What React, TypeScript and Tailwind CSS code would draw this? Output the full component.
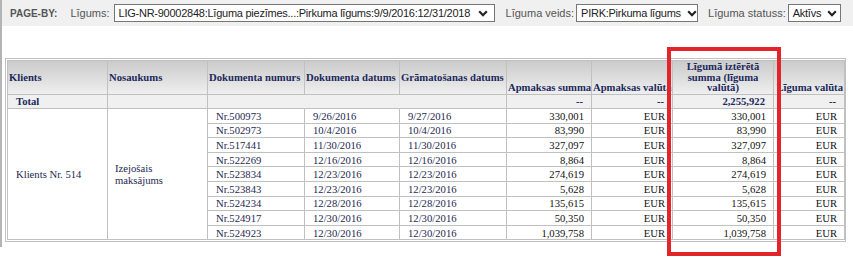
import React from 'react';

const rows = [
  { nr: 'Nr.500973', doc: '9/26/2016', book: '9/27/2016', sum: '330,001', cur: 'EUR', spent: '330,001', cur2: 'EUR' },
  { nr: 'Nr.502973', doc: '10/4/2016', book: '10/4/2016', sum: '83,990', cur: 'EUR', spent: '83,990', cur2: 'EUR' },
  { nr: 'Nr.517441', doc: '11/30/2016', book: '11/30/2016', sum: '327,097', cur: 'EUR', spent: '327,097', cur2: 'EUR' },
  { nr: 'Nr.522269', doc: '12/16/2016', book: '12/16/2016', sum: '8,864', cur: 'EUR', spent: '8,864', cur2: 'EUR' },
  { nr: 'Nr.523834', doc: '12/23/2016', book: '12/23/2016', sum: '274,619', cur: 'EUR', spent: '274,619', cur2: 'EUR' },
  { nr: 'Nr.523843', doc: '12/23/2016', book: '12/23/2016', sum: '5,628', cur: 'EUR', spent: '5,628', cur2: 'EUR' },
  { nr: 'Nr.524234', doc: '12/28/2016', book: '12/28/2016', sum: '135,615', cur: 'EUR', spent: '135,615', cur2: 'EUR' },
  { nr: 'Nr.524917', doc: '12/30/2016', book: '12/30/2016', sum: '50,350', cur: 'EUR', spent: '50,350', cur2: 'EUR' },
  { nr: 'Nr.524923', doc: '12/30/2016', book: '12/30/2016', sum: '1,039,758', cur: 'EUR', spent: '1,039,758', cur2: 'EUR' },
];

function Chevron() {
  return (
    <svg width="10" height="7" viewBox="0 0 10 7" className="shrink-0">
      <path d="M1.2 1.3 L5 5.2 L8.8 1.3" fill="none" stroke="#222" strokeWidth="2.2" />
    </svg>
  );
}

function Select({ value, width }: { value: string; width: string }) {
  return (
    <div className={`${width} h-[18px] flex items-center justify-between gap-[6px] border border-[#767676] bg-white pl-[4px] pr-[6px] text-[11px] text-[#222] whitespace-nowrap overflow-hidden`}>
      <span className="tracking-[-0.25px]">{value}</span>
      <Chevron />
    </div>
  );
}

const hd = 'border border-[#c0c0c0] px-[1px] font-bold text-[#1c2a5c]';
const td = 'border border-[#c0c0c0] h-[14.6px] py-0 leading-[12px]';

export default function App() {
  return (
    <div className="w-[853px] h-[258px] bg-white font-['Liberation_Sans',Arial,sans-serif]">
      <div className="h-[247px] border-l-2 border-[#b4b4b4]">
        <div className="h-[26px] bg-[#f0f0f0] flex items-center pl-[8px]">
          <span className="text-[10px] font-bold text-[#555] mr-[13px]">PAGE-BY:</span>
          <span className="text-[11px] text-[#555] mr-[4px]">Līgums:</span>
          <Select width="w-[381px]" value="LIG-NR-90002848:Līguma piezīmes...:Pirkuma līgums:9/9/2016:12/31/2018" />
          <span className="text-[11px] text-[#555] ml-[11px] mr-[2px]">Līguma veids:</span>
          <Select width="w-[122px]" value="PIRK:Pirkuma līgums" />
          <span className="text-[11px] text-[#555] ml-[10px] mr-[2px]">Līguma statuss:</span>
          <Select width="w-[53px]" value="Aktīvs" />
        </div>

        <div className="mt-[32px] ml-[3px] w-[841px] border border-[#c0c0c0] p-[1px]">
          <table className="table-fixed border-collapse w-[837px] text-[10.67px] font-['Liberation_Serif','Times_New_Roman',serif]">
            <colgroup>
              <col className="w-[100px]" />
              <col className="w-[100px]" />
              <col className="w-[97px]" />
              <col className="w-[95px]" />
              <col className="w-[107px]" />
              <col className="w-[85px]" />
              <col className="w-[81px]" />
              <col className="w-[101px]" />
              <col className="w-[71px]" />
            </colgroup>
            <thead>
              <tr className="h-[32px] bg-gradient-to-b from-[#cbcbcb] to-[#f0f0f0] leading-[10.5px]">
                <th className={`${hd} text-left align-middle`}>Klients</th>
                <th className={`${hd} text-left align-middle`}>Nosaukums</th>
                <th className={`${hd} text-left align-middle whitespace-nowrap`}>Dokumenta numurs</th>
                <th className={`${hd} text-left align-middle whitespace-nowrap`}>Dokumenta datums</th>
                <th className={`${hd} text-left align-middle whitespace-nowrap overflow-hidden`}>Grāmatošanas datums</th>
                <th className={`${hd} text-right align-bottom pb-[1px] whitespace-nowrap`}>Apmaksas summa</th>
                <th className={`${hd} text-right align-bottom pb-[1px] whitespace-nowrap overflow-hidden`}>Apmaksas valūta</th>
                <th className={`${hd} text-center align-bottom pb-[1px] px-[6px]`}>Līgumā iztērētā summa (līguma valūtā)</th>
                <th className={`${hd} text-right align-bottom pb-[1px] whitespace-nowrap overflow-hidden`}>Līguma valūta</th>
              </tr>
            </thead>
            <tbody>
              <tr className="bg-[#f0f0f0] font-bold text-[#1c2a5c]">
                <td className={`${td} pl-[8px]`}>Total</td>
                <td className={td}></td>
                <td className={td} colSpan={3}></td>
                <td className={`${td} text-right pr-[8px]`}>--</td>
                <td className={`${td} text-right pr-[8px]`}>--</td>
                <td className={`${td} text-right pr-[8px]`}>2,255,922</td>
                <td className={`${td} text-right pr-[8px]`}>--</td>
              </tr>
              {rows.map((r, i) => (
                <tr key={r.nr} className="bg-white">
                  {i === 0 && (
                    <>
                      <td rowSpan={9} className={`${td} pl-[8px] text-[#24284f] align-middle`}>Klients Nr. 514</td>
                      <td rowSpan={9} className={`${td} pl-[7px] pr-[20px] text-[#24284f] align-middle`}>Izejošais maksājums</td>
                    </>
                  )}
                  <td className={`${td} pl-[8px] text-[#24284f]`}>{r.nr}</td>
                  <td className={`${td} pl-[8px] text-[#24284f]`}>{r.doc}</td>
                  <td className={`${td} pl-[8px] text-[#24284f]`}>{r.book}</td>
                  <td className={`${td} text-right pr-[7px] text-[#111]`}>{r.sum}</td>
                  <td className={`${td} text-right pr-[7px] text-[#111]`}>{r.cur}</td>
                  <td className={`${td} text-right pr-[7px] text-[#111]`}>{r.spent}</td>
                  <td className={`${td} text-right pr-[7px] text-[#111]`}>{r.cur2}</td>
                </tr>
              ))}
            </tbody>
          </table>
        </div>
      </div>

      <div className="absolute left-[667px] top-[47px] w-[114px] h-[209px] border-4 border-[#e3242b] pointer-events-none"></div>
    </div>
  );
}
